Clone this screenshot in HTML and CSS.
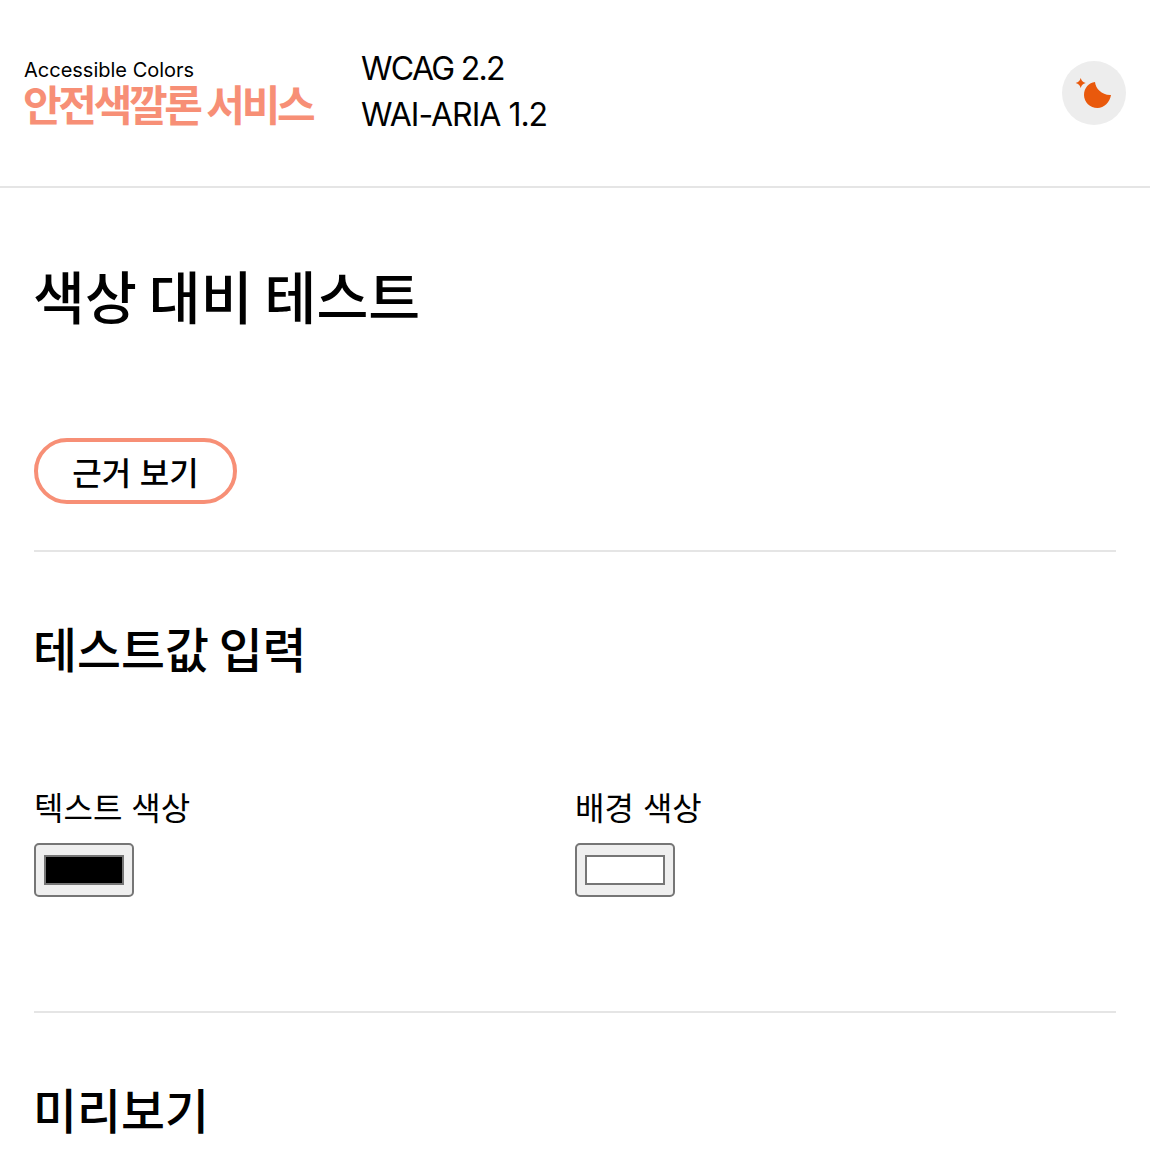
FILE: index.html
```html
<!DOCTYPE html>
<html lang="ko">

<head>
  <meta charset="UTF-8">
  <meta name="viewport" content="width=device-width, initial-scale=1.0">
  <title>색상 대비 테스트 - 안전색깔론 서비스</title>
  <link rel="stylesheet" href="styles.css">
</head>

<body>
  <header class="site-header">
    <a class="logo" href="#">
      <span class="logo-sub">Accessible Colors</span>
      <span class="logo-main">안전색깔론 서비스</span>
    </a>
    <nav class="site-nav">
      <a href="#">WCAG 2.2</a>
      <a href="#">WAI-ARIA 1.2</a>
    </nav>
    <button class="theme-btn" aria-label="테마 변경">
      <svg width="40" height="40" viewBox="0 0 40 40">
        <path class="theme-icon" d="M6.7 5 C7.6 7.9 8.8 9.1 11.7 10 C8.8 10.9 7.6 12.1 6.7 15 C5.8 12.1 4.6 10.9 1.7 10 C4.6 9.1 5.8 7.9 6.7 5 Z" />
        <path class="theme-icon" d="M21 9 C21.5 15.5 28 22.5 37 22 C36 29 30 35 23.5 35 C16 35 10 29 10 22 C10 15 15 9.5 21 9 Z" />
      </svg>
    </button>
  </header>

  <main class="content">
    <h1 class="page-title">색상 대비 테스트</h1>
    <a class="basis-btn" href="#">근거 보기</a>

    <section class="test-section input-section">
      <h2>테스트값 입력</h2>
      <div class="color-fields">
        <div class="color-field">
          <label for="textColor">텍스트 색상</label>
          <input type="color" id="textColor" value="#000000">
        </div>
        <div class="color-field">
          <label for="bgColor">배경 색상</label>
          <input type="color" id="bgColor" value="#ffffff">
        </div>
      </div>
    </section>

    <section class="test-section">
      <h2>미리보기</h2>
    </section>
  </main>
</body>

</html>
```

FILE: styles.css
```css
/* Base styles */
body {
  margin: 0;
  padding: 0;
  background-color: #fff;
  color: #000;
  font-family: Inter, "Noto Sans CJK KR", sans-serif;
}

a {
  color: inherit;
  text-decoration: none;
}

/* Header */
.site-header {
  display: flex;
  align-items: center;
  height: 186px;
  padding: 0 24px;
  border-bottom: 2px solid #e5e5e5;
}

.logo {
  display: flex;
  flex-direction: column;
  width: 337px;
}

.logo-sub {
  font-size: 20px;
  line-height: 22px;
}

.logo-main {
  margin-top: 3px;
  margin-left: -1px;
  color: #f78f76;
  font-size: 42px;
  font-weight: 700;
  line-height: 44px;
  letter-spacing: -3.3px;
  white-space: nowrap;
}

.site-nav {
  display: flex;
  flex-direction: column;
  gap: 6px;
  margin-top: -2px;
  font-size: 32px;
  line-height: 40px;
  letter-spacing: -1px;
}

.site-nav a:first-child {
  letter-spacing: -1.7px;
}

.theme-btn {
  display: flex;
  align-items: center;
  justify-content: center;
  width: 64px;
  height: 64px;
  margin-left: auto;
  margin-right: 0;
  padding: 0;
  border: none;
  border-radius: 50%;
  background-color: #ededed;
  cursor: pointer;
}

.theme-icon {
  fill: #e9590c;
}

/* Content */
.content {
  padding: 0 34px;
}

.page-title {
  margin: 0 0 0 -1px;
  padding-top: 72px;
  font-size: 56.4px;
  font-weight: 500;
  line-height: 78px;
  word-spacing: -3px;
}

.basis-btn {
  display: flex;
  align-items: center;
  justify-content: center;
  box-sizing: border-box;
  width: 203px;
  height: 66px;
  margin-top: 100px;
  border: 4px solid #f78f76;
  border-radius: 33px;
  font-size: 32px;
  font-weight: 500;
}

.test-section {
  margin-top: 46px;
  border-top: 2px solid #e5e5e5;
}

.test-section h2 {
  margin: 0 0 0 -1px;
  padding-top: 67px;
  font-size: 47.8px;
  font-weight: 500;
  line-height: 64px;
  word-spacing: -3px;
}

.input-section {
  padding-bottom: 114px;
}

.color-fields {
  display: grid;
  grid-template-columns: 1fr 1fr;
  margin-top: 104px;
}

.color-field label {
  display: block;
  margin-bottom: 12px;
  font-size: 32px;
  line-height: 44px;
}

.color-field input {
  display: block;
  box-sizing: border-box;
  width: 100px;
  height: 54px;
  padding: 10px 8px;
  border: 2px solid #767676;
  border-radius: 5px;
  background-color: #efefef;
}

.color-field input::-webkit-color-swatch-wrapper {
  padding: 0;
}

.color-field input::-webkit-color-swatch {
  border: 2px solid #767676;
}

.input-section + .test-section {
  margin-top: 0;
}
```
